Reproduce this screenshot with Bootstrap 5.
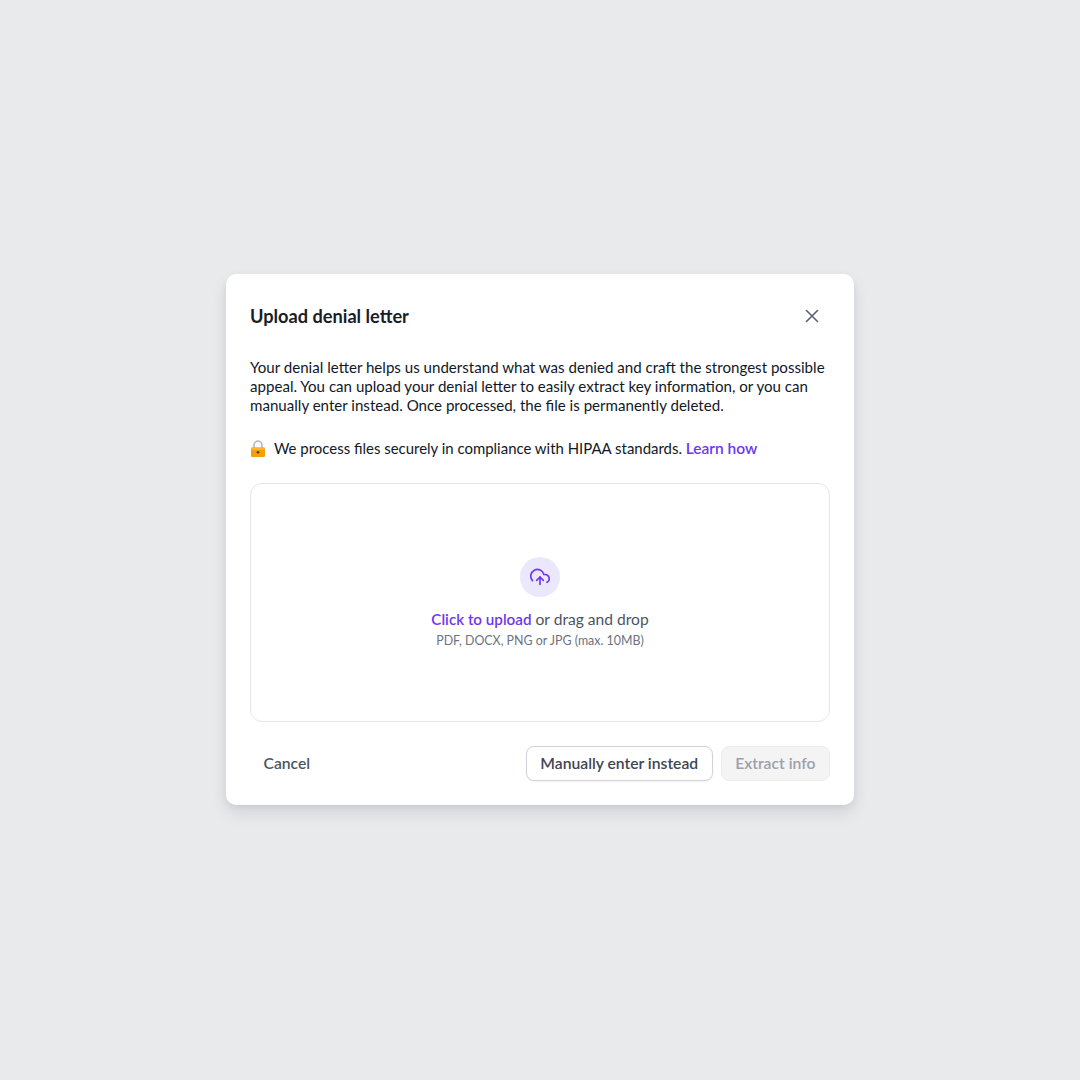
<!DOCTYPE html>
<html lang="en">
<head>
    <meta charset="UTF-8">
    <meta name="viewport" content="width=device-width, initial-scale=1.0">
    <title>Upload denial letter</title>
    <link href="https://cdn.jsdelivr.net/npm/bootstrap@5.3.3/dist/css/bootstrap.min.css" rel="stylesheet">
    <script src="https://cdn.jsdelivr.net/npm/bootstrap@5.3.3/dist/js/bootstrap.bundle.min.js"></script>
    <style>
        body {
            background-color: #e9eaec;
            font-family: "Lato", "Noto Sans", sans-serif;
            color: #111827;
        }

        .pageWrap { padding-bottom: 1px; }

        .uploadDialog {
            width: 628px;
            height: 531px;
            padding: 24px;
            background-color: #fff;
            border-radius: 10px;
            box-shadow: 0 8px 16px rgba(16, 24, 40, 0.1), 0 2px 6px rgba(16, 24, 40, 0.05);
        }

        .dialogHeader { height: 36px; margin-bottom: 24px; }

        .dialogTitle {
            font-size: 18.2px;
            font-weight: 700;
            color: #1a1d26;
            margin: 2px 0 0;
        }

        .closeBtn {
            width: 36px;
            height: 36px;
            border: 0;
            padding: 0;
            background: transparent;
        }

        .bodyText {
            font-size: 15.1px;
            line-height: 19px;
            margin-bottom: 24px;
        }

        .secureLine {
            font-size: 14.95px;
            line-height: 19px;
            margin-bottom: 25px;
            gap: 8px;
        }

        .purpleLink {
            color: #6d38ee;
            font-weight: 600;
            text-decoration: none;
        }

        .learnLink { font-size: 15.5px; }

        .dropZone {
            height: 239px;
            padding-top: 1px;
            border: 1px solid #e5e7eb;
            border-radius: 12px;
            margin-bottom: 24px;
        }

        .uploadCircle {
            width: 40px;
            height: 40px;
            border-radius: 50%;
            background-color: #ebe7fd;
            margin-bottom: 12px;
        }

        .dropText { font-size: 15.6px; line-height: 20px; color: #4b5563; }
        .dropText .purpleLink { font-size: 15.2px; }
        .dropHint { font-size: 12.4px; line-height: 18px; margin-top: 3px; color: #6b7280; }

        .footerBtn {
            height: 35px;
            padding: 0 13.5px;
            font-size: 15.7px;
            font-weight: 600;
            line-height: 1;
            border-radius: 8px;
        }

        .cancelBtn { color: #4b5563; border: 0; background: transparent; }

        .manualBtn {
            color: #404552;
            background: #fff;
            border: 1px solid #d1d3da;
            box-shadow: 0 1px 2px rgba(16, 24, 40, 0.06);
        }

        .extractBtn {
            color: #9ca0ab;
            background: #f4f4f5;
            border: 1px solid #ececee;
        }
    </style>
</head>
<body>
<div class="pageWrap d-flex justify-content-center align-items-center min-vh-100">
    <div class="uploadDialog d-flex flex-column">
        <div class="dialogHeader d-flex justify-content-between align-items-center">
            <h1 class="dialogTitle">Upload denial letter</h1>
            <button class="closeBtn d-flex justify-content-center align-items-center" type="button" aria-label="Close">
                <svg width="14" height="14" viewBox="0 0 14 14" fill="none" stroke="#5b6170" stroke-width="1.6" stroke-linecap="round"><path d="M1.5 1.5l11 11M12.5 1.5l-11 11"/></svg>
            </button>
        </div>

        <p class="bodyText">Your denial letter helps us understand what was denied and craft the strongest possible appeal. You can upload your denial letter to easily extract key information, or you can manually enter instead. Once processed, the file is permanently deleted.</p>

        <div class="secureLine d-flex align-items-center">
            <svg width="16" height="18" viewBox="0 0 16 18">
                <path d="M4 8V5.2a4 4 0 0 1 8 0V8" fill="none" stroke="#b9bec6" stroke-width="1.8"/>
                <rect x="1" y="7.5" width="14" height="9.5" rx="1.2" fill="#f59e0b"/>
                <rect x="1" y="7.5" width="14" height="2.5" rx="1.2" fill="#fbb62c"/>
                <circle cx="8" cy="12.2" r="1.3" fill="#5b3a0c"/>
            </svg>
            <span>We process files securely in compliance with HIPAA standards. <a class="purpleLink learnLink" href="#">Learn how</a></span>
        </div>

        <div class="dropZone d-flex flex-column justify-content-center align-items-center">
            <div class="uploadCircle d-flex justify-content-center align-items-center">
                <svg width="20" height="20" viewBox="0 0 24 24" fill="none" stroke="#6d38ee" stroke-width="2" stroke-linecap="round" stroke-linejoin="round">
                    <path d="M16 16l-4-4-4 4"/>
                    <path d="M12 12v9"/>
                    <path d="M20.4 18.4A5 5 0 0 0 18 9h-1.3A8 8 0 1 0 3 16.3"/>
                </svg>
            </div>
            <div class="dropText"><a class="purpleLink" href="#">Click to upload</a> or drag and drop</div>
            <div class="dropHint">PDF, DOCX, PNG or JPG (max. 10MB)</div>
        </div>

        <div class="d-flex justify-content-between align-items-center">
            <button class="footerBtn cancelBtn" type="button">Cancel</button>
            <div class="d-flex gap-2">
                <button class="footerBtn manualBtn" type="button">Manually enter instead</button>
                <button class="footerBtn extractBtn" type="button" disabled>Extract info</button>
            </div>
        </div>
    </div>
</div>
</body>
</html>
